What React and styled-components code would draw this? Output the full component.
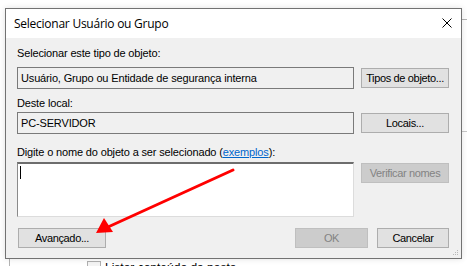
import React from 'react';
import styled, { createGlobalStyle } from 'styled-components';

const GlobalStyle = createGlobalStyle`
  html, body {
    margin: 0;
    padding: 0;
    background: #ffffff;
  }
  body {
    font-family: "Liberation Sans", Arial, sans-serif;
  }
`;

const Desktop = styled.div`
  position: relative;
  width: 467px;
  height: 266px;
  overflow: hidden;
  background: #ffffff;
`;

const BackWindow = styled.div`
  position: absolute;
  left: 9px;
  top: 19px;
  width: 520px;
  height: 320px;
  border-left: 1px solid #b4b4b4;
  border-top: 1px solid #b4b4b4;
  background: #ffffff;
  display: flex;
  flex-direction: column;
`;

const BackHeader = styled.div`
  height: 111px;
  border-bottom: 1px solid #c8c8c8;
`;

const BackRow = styled.div`
  margin-top: 129px;
  padding-left: 77px;
  display: flex;
  align-items: center;
  gap: 4px;
  font-size: 12px;
  color: #000;
`;

const BackCheck = styled.span`
  width: 12px;
  height: 12px;
  border: 1px solid #b0b0b0;
  background: #f4f4f4;
`;

const Dialog = styled.div`
  position: absolute;
  left: 5px;
  top: 8px;
  width: 457px;
  height: 251px;
  box-sizing: border-box;
  border: 1px solid #727272;
  background: #f0f0f0;
  display: flex;
  flex-direction: column;
  box-shadow: 0 0 6px rgba(0, 0, 0, 0.12);
`;

const TitleBar = styled.div`
  height: 30px;
  background: #ffffff;
  display: flex;
  align-items: center;
  justify-content: space-between;
  padding: 0 9px 0 8px;
`;

const Title = styled.span`
  font-family: "Open Sans", "Noto Sans", sans-serif;
  font-size: 12px;
  letter-spacing: -0.25px;
  color: #000;
  margin-top: -1px;
`;

const CloseIcon = styled.svg`
  width: 10px;
  height: 10px;
  margin-top: -2px;
`;

const Body = styled.div`
  flex: 1;
  position: relative;
  padding: 8px 12px 10px 11px;
  display: grid;
  grid-template-columns: 337px 88px;
  column-gap: 7px;
  align-content: start;
  font-size: 11px;
  letter-spacing: -0.15px;
  color: #000;
`;

const Label = styled.div`
  grid-column: 1 / span 2;
  height: 13px;
  line-height: 13px;
  margin-top: ${p => p.$top || 0}px;
  margin-bottom: ${p => p.$bottom || 0}px;
`;

const Link = styled.a`
  color: #0066cc;
  text-decoration: underline;
`;

const Field = styled.div`
  box-sizing: border-box;
  height: 22px;
  border: 1px solid #7a7a7a;
  background: #f0f0f0;
  padding: 0 3px;
  line-height: 18px;
  display: flex;
  align-items: center;
`;

const TextArea = styled.div`
  box-sizing: border-box;
  height: 55px;
  border-style: solid;
  border-width: 2px 1px 1px 1px;
  border-color: #6d6d6d #dcdcdc #dcdcdc #8a8a8a;
  background: #ffffff;
  padding: 2px 2px;
`;

const Caret = styled.span`
  display: block;
  width: 1px;
  height: 13px;
  background: #000;
`;

const Button = styled.div`
  box-sizing: border-box;
  width: ${p => p.$w || 88}px;
  height: 20px;
  margin-top: ${p => p.$top || 0}px;
  align-self: ${p => p.$align || 'center'};
  border: 1px solid ${p => (p.$disabled ? '#bfbfbf' : '#adadad')};
  background: ${p => (p.$disabled ? '#cccccc' : '#e1e1e1')};
  color: ${p => (p.$disabled ? '#838383' : '#000')};
  display: flex;
  align-items: center;
  justify-content: center;
  line-height: 1;
  letter-spacing: -0.35px;
  white-space: nowrap;
`;

const Footer = styled.div`
  grid-column: 1 / span 2;
  margin-top: 11px;
  margin-left: 1px;
  display: flex;
  align-items: center;
`;

const Spacer = styled.div`
  flex: 1;
`;

const FooterGap = styled.div`
  width: 9px;
`;

const Grip = styled.svg`
  position: absolute;
  right: 2px;
  bottom: 2px;
  width: 7px;
  height: 7px;
`;

const Arrow = styled.svg`
  position: absolute;
  left: 0;
  top: 0;
  width: 467px;
  height: 266px;
  pointer-events: none;
`;

export default function App() {
  return (
    <>
      <GlobalStyle />
      <Desktop>
        <BackWindow>
          <BackHeader />
          <BackRow>
            <BackCheck />
            <span>Listar conteúdo da pasta</span>
          </BackRow>
        </BackWindow>
        <Dialog>
          <TitleBar>
            <Title>Selecionar Usuário ou Grupo</Title>
            <CloseIcon viewBox="0 0 10 10">
              <path d="M0.5 0.5 L9.5 9.5 M9.5 0.5 L0.5 9.5" stroke="#000" strokeWidth="1" fill="none" />
            </CloseIcon>
          </TitleBar>
          <Body>
            <Label $top={1} $bottom={7}>Selecionar este tipo de objeto:</Label>
            <Field>Usuário, Grupo ou Entidade de segurança interna</Field>
            <Button>Tipos de objeto...</Button>
            <Label $top={8} $bottom={2}>Deste local:</Label>
            <Field>PC-SERVIDOR</Field>
            <Button>Locais...</Button>
            <Label $top={12} $bottom={3}>
              Digite o nome do objeto a ser selecionado (<Link>exemplos</Link>):
            </Label>
            <TextArea>
              <Caret />
            </TextArea>
            <Button $disabled $align="start" $top={1}>Verificar nomes</Button>
            <Footer>
              <Button>Avançado...</Button>
              <Spacer />
              <Button $disabled $w={73}>OK</Button>
              <FooterGap />
              <Button $w={72}>Cancelar</Button>
            </Footer>
            <Grip viewBox="0 0 7 7">
              <rect x="5" y="1" width="1" height="1" fill="#b8b8b8" />
              <rect x="3" y="3" width="1" height="1" fill="#b8b8b8" />
              <rect x="5" y="3" width="1" height="1" fill="#b8b8b8" />
              <rect x="1" y="5" width="1" height="1" fill="#b8b8b8" />
              <rect x="3" y="5" width="1" height="1" fill="#b8b8b8" />
              <rect x="5" y="5" width="1" height="1" fill="#b8b8b8" />
            </Grip>
          </Body>
        </Dialog>
        <Arrow viewBox="0 0 467 266">
          <path d="M233 170 L108 227" stroke="#ff0000" strokeWidth="3" strokeLinecap="round" fill="none" />
          <path d="M96 233 L104 218 L113 232 Z" fill="#ff0000" />
        </Arrow>
      </Desktop>
    </>
  );
}
